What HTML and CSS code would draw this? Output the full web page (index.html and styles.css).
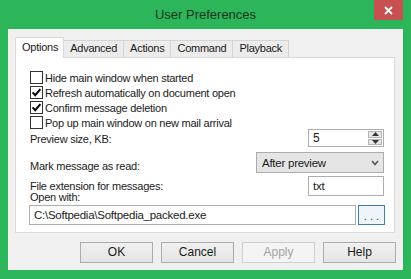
FILE: index.html
```html
<!DOCTYPE html>
<html>
<head>
<meta charset="utf-8">
<link rel="stylesheet" href="styles.css">
</head>
<body>
<div class="window">
  <div class="titlebar">
    <span></span>
    <div class="title">User Preferences</div>
    <div class="close-wrap">
      <div class="close"><svg width="9" height="9" viewBox="0 0 9 9"><path d="M1 1 L8 8 M8 1 L1 8" stroke="#fff" stroke-width="1.8" fill="none"/></svg></div>
    </div>
  </div>
  <div class="client">
    <div class="tabs">
      <div class="tab active">Options</div>
      <div class="tab">Advanced</div>
      <div class="tab">Actions</div>
      <div class="tab">Command</div>
      <div class="tab">Playback</div>
    </div>
    <div class="panel">
      <div class="checks">
        <div class="check"><span class="box"></span><span>Hide main window when started</span></div>
        <div class="check"><span class="box"><svg width="11" height="11" viewBox="0 0 11 11"><path d="M1.6 5.4 L4.2 8.2 L9.4 2.2" stroke="#000" stroke-width="2" fill="none"/></svg></span><span>Refresh automatically on document open</span></div>
        <div class="check"><span class="box"><svg width="11" height="11" viewBox="0 0 11 11"><path d="M1.6 5.4 L4.2 8.2 L9.4 2.2" stroke="#000" stroke-width="2" fill="none"/></svg></span><span>Confirm message deletion</span></div>
        <div class="check"><span class="box"></span><span>Pop up main window on new mail arrival</span></div>
      </div>
      <div class="row preview-row">
        <span class="lbl lbl-preview">Preview size, KB:</span>
        <div class="spin">
          <span class="spin-val">5</span>
          <div class="spin-btns">
            <span class="spin-btn"><svg width="7" height="4" viewBox="0 0 7 4"><path d="M0 4 L3.5 0 L7 4 Z" fill="#333"/></svg></span>
            <span class="spin-btn"><svg width="7" height="4" viewBox="0 0 7 4"><path d="M0 0 L3.5 4 L7 0 Z" fill="#333"/></svg></span>
          </div>
        </div>
      </div>
      <div class="row mark-row">
        <span class="lbl lbl-mark">Mark message as read:</span>
        <div class="select">
          <span>After preview</span>
          <svg width="8" height="6" viewBox="0 0 8 6"><path d="M1 1 L4 4.5 L7 1" stroke="#555" stroke-width="1.6" fill="none"/></svg>
        </div>
      </div>
      <div class="row ext-row">
        <span class="lbl">File extension for messages:</span>
        <div class="input small-input">txt</div>
      </div>
      <div class="open-lbl">Open with:</div>
      <div class="row open-row">
        <div class="input path-input">C:\Softpedia\Softpedia_packed.exe</div>
        <div class="browse">. . .</div>
      </div>
    </div>
    <div class="buttons">
      <div class="btn">OK</div>
      <div class="btn">Cancel</div>
      <div class="btn disabled">Apply</div>
      <div class="btn">Help</div>
    </div>
  </div>
</div>
</body>
</html>
```

FILE: styles.css
```css
* { box-sizing: border-box; }

body {
  margin: 0;
  width: 411px;
  height: 279px;
  overflow: hidden;
  background: #2db55a;
  font-family: "Liberation Sans", Arial, sans-serif;
  font-size: 11px;
  letter-spacing: -0.25px;
  color: #1a1a1a;
}

.window {
  display: flex;
  flex-direction: column;
  height: 279px;
}

.titlebar {
  height: 29px;
  display: grid;
  grid-template-columns: 1fr auto 1fr;
}

.title {
  font-size: 13px;
  letter-spacing: 0;
  line-height: 30px;
  color: #17361f;
}

.close-wrap {
  display: flex;
  justify-content: flex-end;
  align-items: flex-start;
  padding-right: 8px;
}

.close {
  width: 29px;
  height: 20px;
  background: #c75050;
  display: flex;
  align-items: center;
  justify-content: center;
}

.client {
  flex: 1;
  margin: 0 8px 9px 8px;
  background: #f0f0f0;
  padding: 8px 8px 7px 7px;
  display: flex;
  flex-direction: column;
}

.tabs {
  display: flex;
  align-items: flex-end;
  height: 20px;
}

.tab {
  height: 17px;
  line-height: 15px;
  padding: 0 6px;
  border: 1px solid #d4d4d4;
  border-bottom: none;
  background: #ececec;
  margin-left: -1px;
  white-space: nowrap;
}

.tab.active {
  position: relative;
  z-index: 1;
  height: 21px;
  margin-bottom: -1px;
  margin-left: 0;
  line-height: 18px;
  padding: 0 5px 0 6px;
  background: #fff;
  border-color: #d9d9d9;
}

.panel {
  height: 176px;
  background: #fff;
  border: 1px solid #d9d9d9;
  padding: 12px 10px 7px 14px;
  display: flex;
  flex-direction: column;
}

.checks {
  display: flex;
  flex-direction: column;
}

.check {
  display: flex;
  align-items: center;
  gap: 2px;
  height: 15px;
  white-space: nowrap;
}

.box {
  width: 13px;
  height: 13px;
  border: 1px solid #333;
  background: #fff;
  display: flex;
  align-items: center;
  justify-content: center;
  flex: none;
}

.row {
  display: flex;
  align-items: center;
  justify-content: space-between;
}

.lbl {
  line-height: 13px;
}

.preview-row {
  margin-top: -1px;
  height: 18px;
}

.lbl-preview {
  padding-top: 3px;
}

.spin {
  width: 76px;
  height: 18px;
  border: 1px solid #abadb3;
  display: flex;
  align-items: stretch;
  background: #fff;
}

.spin-val {
  flex: 1;
  padding-left: 4px;
  font-size: 12px;
  line-height: 16px;
}

.spin-btns {
  display: flex;
  flex-direction: column;
  gap: 1px;
  padding: 1px 1px 1px 0;
}

.spin-btn {
  width: 14px;
  flex: 1;
  background: #e6e6e6;
  border: 1px solid #b5b5b5;
  display: flex;
  align-items: center;
  justify-content: center;
}

.mark-row {
  margin-top: 5px;
  height: 21px;
}

.lbl-mark {
  padding-top: 8px;
}

.select {
  width: 128px;
  height: 21px;
  border: 1px solid #acacac;
  background: #e5e5e5;
  display: flex;
  align-items: center;
  justify-content: space-between;
  padding: 0 4px 0 5px;
  font-size: 11.5px;
}

.ext-row {
  margin-top: 3px;
  height: 20px;
}

.input {
  height: 20px;
  border: 1px solid #abadb3;
  background: #fff;
  line-height: 18px;
  padding-left: 4px;
  font-size: 11.5px;
  white-space: nowrap;
}

.small-input {
  width: 76px;
}

.open-lbl {
  margin-top: -5px;
  line-height: 13px;
}

.open-row {
  margin-top: 1px;
  height: 20px;
  gap: 2px;
}

.path-input {
  flex: 1;
  margin-left: -1px;
}

.browse {
  width: 27px;
  height: 20px;
  margin-right: -1px;
  border: 1px solid #3c7fb1;
  background: #eef4fa;
  text-align: center;
  line-height: 20px;
  letter-spacing: 0;
  color: #333;
}

.buttons {
  display: flex;
  justify-content: flex-end;
  gap: 8px;
  margin-top: 9px;
  margin-right: -1px;
}

.btn {
  width: 73px;
  height: 21px;
  border: 1px solid #acacac;
  background: linear-gradient(#f0f0f0, #e5e5e5);
  text-align: center;
  line-height: 19px;
  font-size: 12px;
  letter-spacing: 0;
}

.btn.disabled {
  color: #a3a3a3;
  border-color: #cfcfcf;
  background: #f4f4f4;
}
```
